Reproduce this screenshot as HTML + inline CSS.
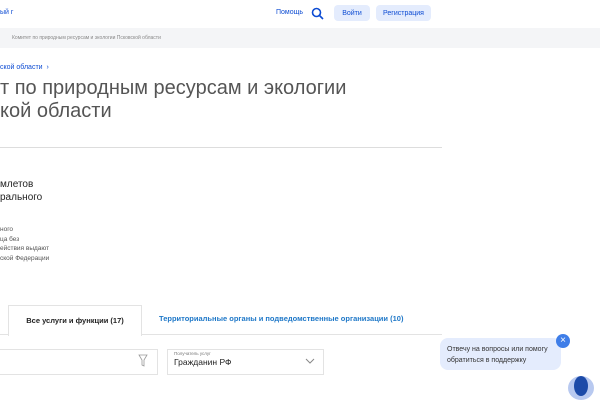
<!DOCTYPE html><html><head><style>
body{margin:0;width:600px;height:400px;overflow:hidden;background:#fff;font-family:"Liberation Sans",sans-serif;position:relative}
.a{position:absolute;white-space:nowrap}
</style></head><body>
<div class="a" style="left:0;top:9px;font-size:7px;color:#0d4cd3">ый г</div>
<div class="a" style="left:276px;top:9px;font-size:7px;color:#0d4cd3">Помощь</div>
<svg class="a" style="left:311px;top:7px" width="13" height="13" viewBox="0 0 13 13"><circle cx="5.5" cy="5.5" r="4" fill="none" stroke="#0d4cd3" stroke-width="1.6"/><path d="M8.5 8.5L12 12" stroke="#0d4cd3" stroke-width="1.6"/></svg>
<div class="a" style="left:334px;top:5px;width:36px;height:16px;background:#e4ecfd;border-radius:4px;font-size:7px;color:#0d4cd3;text-align:center;line-height:17px">Войти</div>
<div class="a" style="left:376px;top:5px;width:55px;height:16px;background:#e4ecfd;border-radius:4px;font-size:7px;color:#0d4cd3;text-align:center;line-height:17px">Регистрация</div>
<div class="a" style="left:0;top:28px;width:600px;height:20px;background:#f4f5f7"></div>
<div class="a" style="left:12px;top:35px;font-size:5px;color:#888">Комитет по природным ресурсам и экологии Псковской области</div>
<div class="a" style="left:0;top:64px;font-size:7px;color:#0d4cd3">ской области &nbsp;›</div>
<div class="a" style="left:0;top:77px;font-size:20px;color:#555;line-height:23px">т по природным ресурсам и экологии<br>кой области</div>
<div class="a" style="left:0;top:147px;width:442px;height:1px;background:#ddd"></div>
<div class="a" style="left:0;top:178px;font-size:10px;color:#222;line-height:13px">млетов<br>рального</div>
<div class="a" style="left:0;top:225px;font-size:6.5px;color:#555;line-height:9.7px">ного<br>ца без<br>ействия выдают<br>ской Федерации</div>
<div class="a" style="left:0;top:334px;width:442px;height:1px;background:#e3e3e3"></div>
<div class="a" style="left:8px;top:305px;width:132px;height:30px;background:#fff;border:1px solid #e3e3e3;border-bottom:none;font-size:7.5px;font-weight:bold;color:#222;text-align:center;line-height:29px">Все услуги и функции (17)</div>
<div class="a" style="left:159px;top:314px;font-size:7.5px;font-weight:bold;color:#1f78c8">Территориальные органы и подведомственные организации (10)</div>
<div class="a" style="left:-2px;top:349px;width:158px;height:24px;border:1px solid #e3e3e3"></div>
<svg class="a" style="left:138px;top:354px" width="10" height="13" viewBox="0 0 10 13"><path d="M1 1H9L6 6V12L4 11V6Z" fill="none" stroke="#999" stroke-width="0.8"/></svg>
<div class="a" style="left:167px;top:349px;width:155px;height:24px;border:1px solid #e3e3e3"></div>
<div class="a" style="left:174px;top:351px;font-size:4.5px;color:#777">Получатель услуг</div>
<div class="a" style="left:174px;top:357px;font-size:8.5px;color:#222">Гражданин РФ</div>
<svg class="a" style="left:305px;top:358px" width="10" height="6"><path d="M1 1L5 5L9 1" fill="none" stroke="#888" stroke-width="1"/></svg>
<div class="a" style="left:440px;top:338px;width:121px;height:32px;background:#e4ecfd;border-radius:8px"></div>
<div class="a" style="left:447px;top:344px;font-size:7px;color:#333;line-height:11px">Отвечу на вопросы или помогу<br>обратиться в поддержку</div>
<div class="a" style="left:556px;top:334px;width:14px;height:14px;border-radius:50%;background:#3f7ee8;color:#fff;font-size:10px;text-align:center;line-height:14px">×</div>
<div class="a" style="left:568px;top:376px;width:26px;height:24px;border-radius:50%;background:#b8c9f0"></div>
<div class="a" style="left:574px;top:376px;width:14px;height:20px;border-radius:50%;background:#1c4aa8"></div>
</body></html>
